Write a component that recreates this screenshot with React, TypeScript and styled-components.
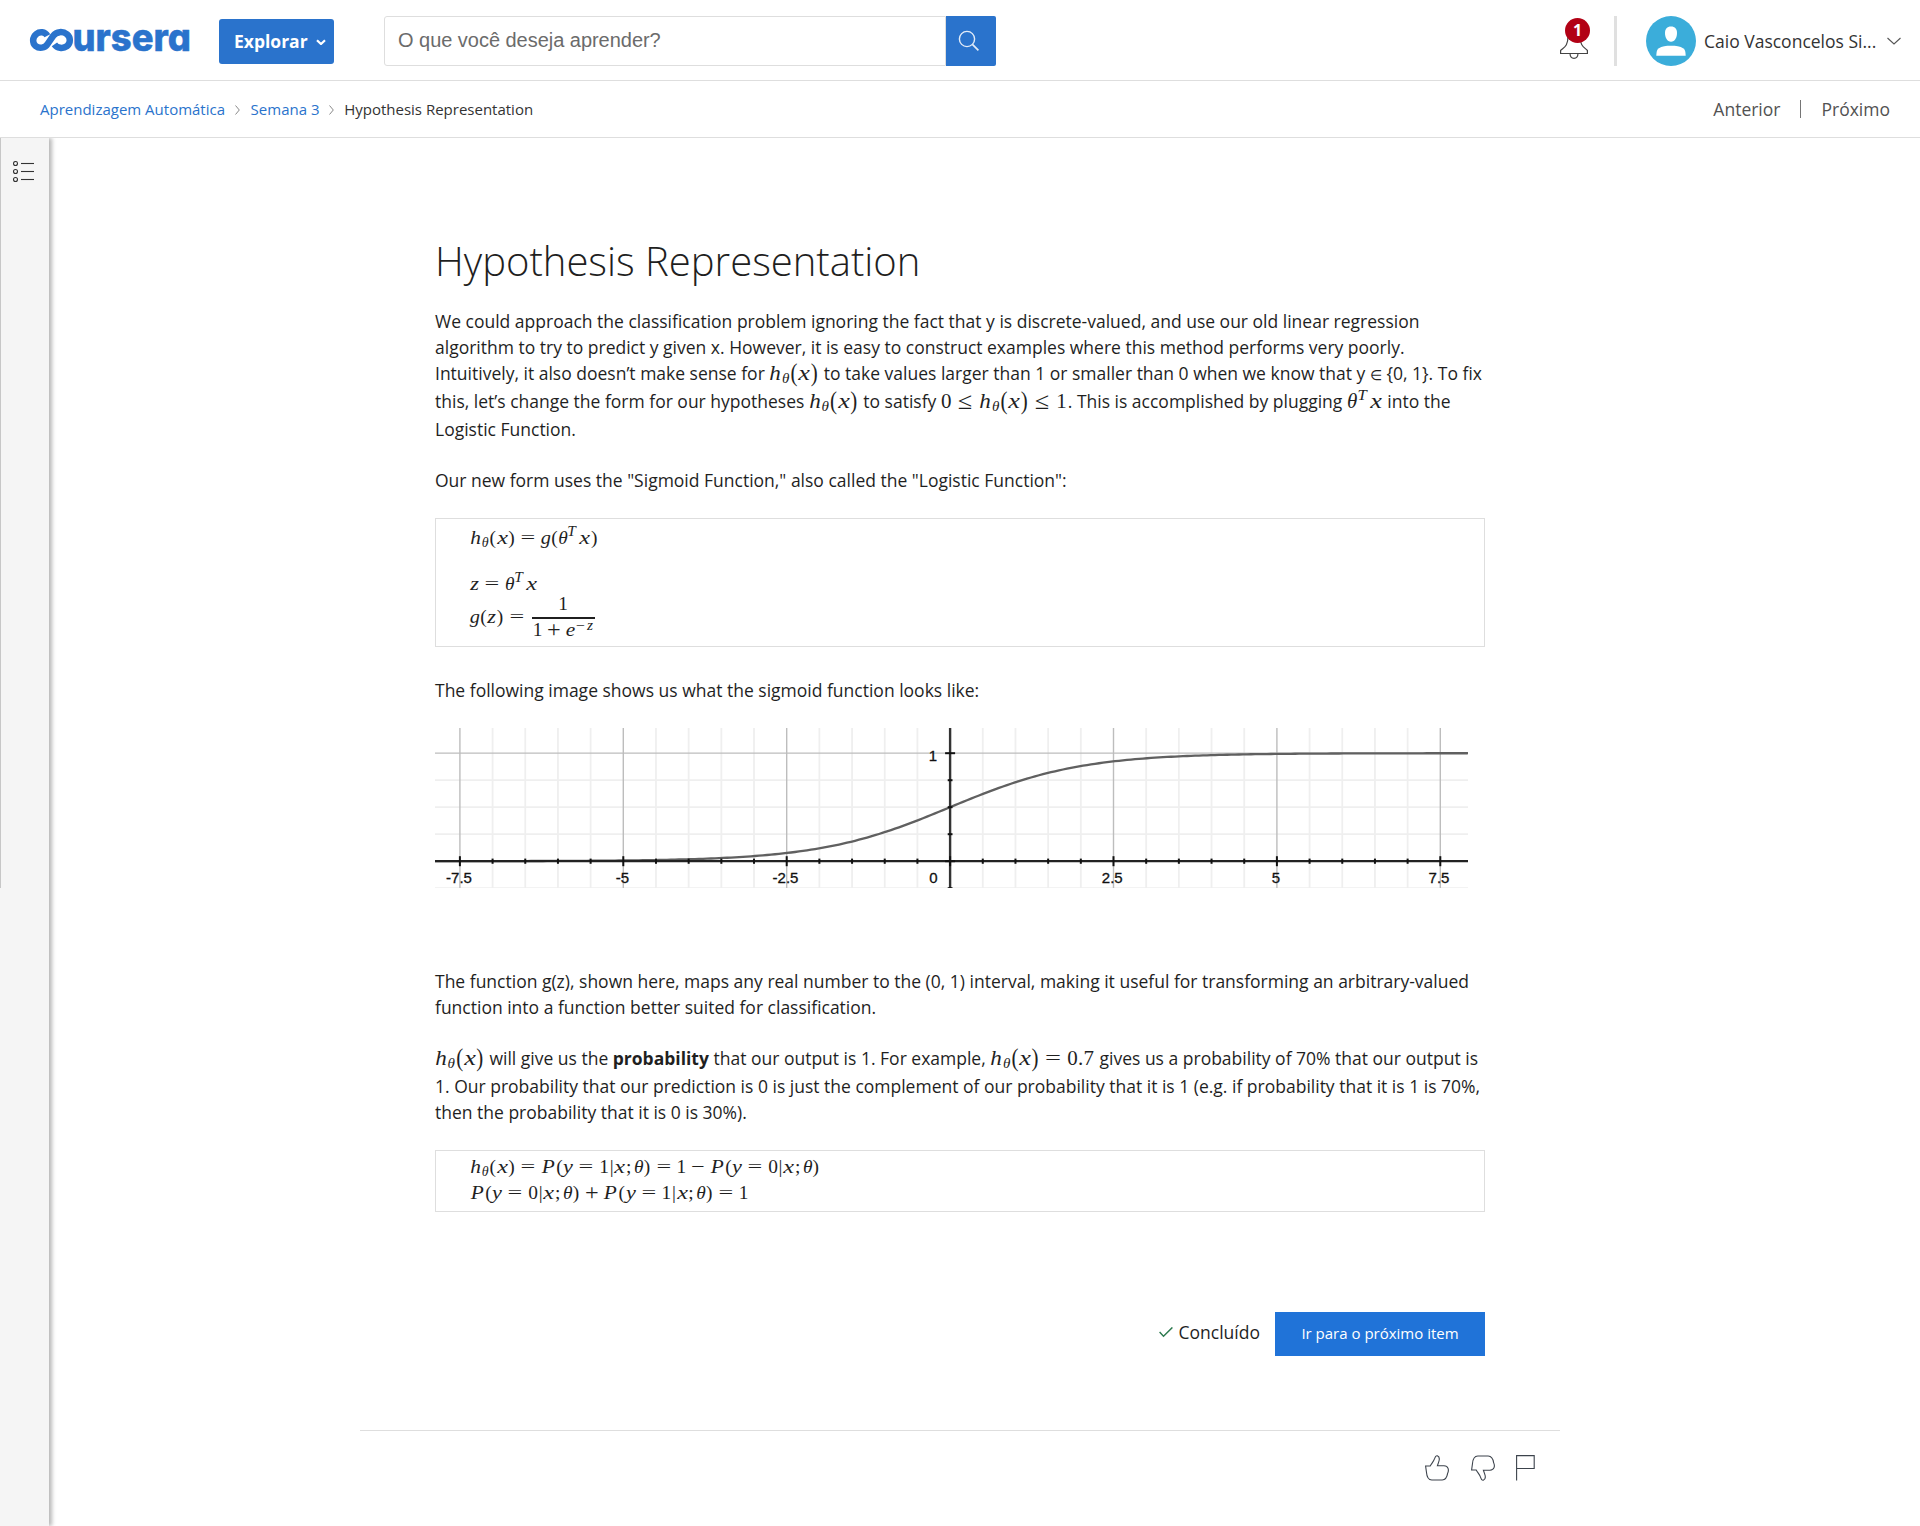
import React from "react";
import styled, { createGlobalStyle, css } from "styled-components";

const BLUE = "#2a73cc";
const SANS = '"Open Sans", "Noto Sans", sans-serif';
const SERIF = '"Liberation Serif", "DejaVu Serif", serif';

const GlobalStyle = createGlobalStyle`
  *, *::before, *::after { box-sizing: border-box; }
  body { margin: 0; background: #fff; color: #1f1f1f; font-family: ${SANS}; font-size: 17.5px; }
  button { font: inherit; border: 0; padding: 0; cursor: pointer; }
  svg { display: block; flex: none; }
  a { text-decoration: none; color: inherit; }
`;

const Page = styled.div`
  width: 1920px;
  height: 1526px;
  display: flex;
  flex-direction: column;
  overflow: hidden;
`;

/* ---------- header ---------- */

const Header = styled.header`
  height: 81px;
  flex: none;
  display: flex;
  align-items: flex-start;
  padding: 16px 19px 0 30px;
  border-bottom: 1px solid #dedede;
`;

const ExploreButton = styled.button`
  display: flex;
  align-items: center;
  gap: 8px;
  width: 115px;
  height: 45px;
  margin: 3px 0 0 30px;
  padding-left: 15px;
  border-radius: 3px;
  background: ${BLUE};
  color: #fff;
  font-weight: 700;
  line-height: 45px;
`;

const Search = styled.form`
  display: flex;
  width: 612px;
  height: 50px;
  margin-left: 50px;
`;

const SearchInput = styled.input`
  flex: 1;
  min-width: 0;
  height: 50px;
  padding: 0 13px 1px;
  border: 1px solid #dedede;
  border-radius: 3px 0 0 3px;
  outline: 0;
  font-family: "Liberation Sans", Arial, sans-serif;
  font-size: 20px;
  letter-spacing: -0.03px;
  &::placeholder { color: #6b6b6b; opacity: 1; }
`;

const SearchButton = styled.button`
  width: 50px;
  height: 50px;
  display: grid;
  place-items: center;
  padding-right: 4px;
  border-radius: 0 2px 2px 0;
  background: ${BLUE};
`;

const Account = styled.div`
  display: flex;
  margin-left: auto;
  height: 50px;
  align-items: center;
`;

const Notifications = styled.div`
  position: relative;
  width: 28px;
  height: 50px;
  padding-top: 14px;
`;

const Badge = styled.span`
  position: absolute;
  left: 5px;
  top: 2px;
  width: 25px;
  height: 25px;
  border-radius: 50%;
  background: #b20115;
  color: #fff;
  font-weight: 700;
  font-size: 16px;
  line-height: 24px;
  text-align: center;
`;

const HeaderRule = styled.div`
  width: 3px;
  height: 50px;
  margin: 0 29px 0 26px;
  background: #e0e0e0;
`;

const UserName = styled.span`
  width: 173px;
  margin: 0 10px 0 8px;
  white-space: nowrap;
  line-height: 50px;
  color: #333;
`;

/* ---------- breadcrumb bar ---------- */

const SubBar = styled.nav`
  height: 57px;
  flex: none;
  display: flex;
  align-items: center;
  justify-content: space-between;
  padding: 0 30px 0 40px;
  border-bottom: 1px solid #dedede;
`;

const Crumbs = styled.div`
  display: flex;
  align-items: center;
  font-size: 15px;
  white-space: nowrap;
`;

const Crumb = styled.a<{ $w: number; $current?: boolean }>`
  width: ${(p) => p.$w}px;
  color: ${(p) => (p.$current ? "#333" : BLUE)};
`;

const CrumbArrow = styled.svg`
  margin: 2px 10.6px 0 10px;
`;

const Pager = styled.div`
  display: flex;
  align-items: center;
  color: #525252;
`;

const PagerRule = styled.span`
  width: 1px;
  height: 18px;
  margin: 0 20px 0 20px;
  background: #757575;
`;

/* ---------- body ---------- */

const Body = styled.div`
  flex: 1;
  display: flex;
  min-height: 0;
  overflow: hidden;
`;

const Rail = styled.aside`
  width: 49px;
  flex: none;
  background: #f5f5f5;
  box-shadow: 3px 0 4px rgba(0, 0, 0, 0.28);
`;

const RailPane = styled.div`
  height: 750px;
  border-left: 1px solid #c7c7c7;
  padding: 23px 0 0 11px;
`;

const Main = styled.main`
  width: 1200px;
  margin-left: 311px;
  display: flex;
  flex-direction: column;
`;

const Article = styled.article`
  height: 1293px;
  padding: 99px 75px 0;
  border-bottom: 1px solid #dedede;
`;

const Title = styled.h1`
  margin: 0 0 23px;
  font-size: 40px;
  line-height: 48px;
  font-weight: 300;
  white-space: nowrap;
`;

const Paragraph = styled.p`
  margin: 0 0 25px;
`;

const Line = styled.span<{ $h?: number; $top?: number }>`
  display: block;
  height: ${(p) => p.$h ?? 26}px;
  line-height: 26px;
  padding-top: ${(p) => p.$top ?? 0}px;
  white-space: nowrap;
`;

const SetMember = styled.span`
  font-size: 14px;
`;

const FormulaBox = styled.div<{ $h: number; $pt: number; $mb?: number }>`
  height: ${(p) => p.$h}px;
  margin-bottom: ${(p) => p.$mb ?? 0}px;
  padding: ${(p) => p.$pt}px 0 0 34px;
  border: 1px solid #dedede;
`;

const FormulaRow = styled.div<{ $h: number; $mt?: number }>`
  display: flex;
  align-items: flex-start;
  height: ${(p) => p.$h}px;
  margin-top: ${(p) => p.$mt ?? 0}px;
`;

const Formula = styled.span<{ $inline?: boolean; $mt?: number; $lh?: number }>`
  display: ${(p) => (p.$inline ? "inline-flex" : "flex")};
  margin-top: ${(p) => p.$mt ?? 0}px;
  margin-right: ${(p) => (p.$inline ? 1 : 0)}px;
  font-family: ${SERIF};
  font-size: ${(p) => (p.$inline ? 21 : 19.4)}px;
  line-height: ${(p) => (p.$inline ? 20 : p.$lh ?? 26)}px;
  white-space: nowrap;
`;

const Glyph = styled.span<{
  $w: number;
  $italic?: boolean;
  $sx?: number;
  $sy?: number;
  $dx?: number;
  $dy?: number;
  $small?: boolean;
}>`
  display: inline-block;
  width: ${(p) => p.$w}em;
  text-align: center;
  font-style: ${(p) => (p.$italic ? "italic" : "normal")};
  transform: translate(${(p) => p.$dx ?? 0}px, ${(p) => p.$dy ?? 0}px) scale(${(p) => p.$sx ?? 1}, ${(p) => p.$sy ?? 1});
  ${(p) =>
    p.$small &&
    css`
      font-size: 0.72em;
    `}
`;

const Fraction = styled.span`
  width: 63px;
  margin-left: 2px;
  display: flex;
  flex-direction: column;
  align-items: center;
`;

const Denominator = styled.span`
  width: 63px;
  padding-left: 1px;
  border-top: 2px solid #1f1f1f;
`;

type G = { t: string; w: number; italic?: boolean; sx?: number; sy?: number; dx?: number; dy?: number; small?: boolean };

const SYMBOLS: Record<string, G> = {
  h: { t: "h", w: 0.576, italic: true, sx: 1.1 },
  x: { t: "x", w: 0.572, italic: true, sx: 1.25 },
  g: { t: "g", w: 0.5, italic: true, sx: 1.05 },
  z: { t: "z", w: 0.468, italic: true, sx: 1.15 },
  y: { t: "y", w: 0.52, italic: true, sx: 1.15 },
  P: { t: "P", w: 0.76, italic: true, sx: 1.1 },
  e: { t: "e", w: 0.466, italic: true, sx: 1.1 },
  q: { t: "θ", w: 0.469, italic: true },
  "(": { t: "(", w: 0.389 },
  ")": { t: ")", w: 0.389 },
  "=": { t: "=", w: 1.334, sx: 1.35, sy: 0.9 },
  "<": { t: "≤", w: 1.334, sx: 1.25, sy: 1.15 },
  "+": { t: "+", w: 1.222, sx: 1.25, sy: 1.2 },
  "-": { t: "−", w: 1.222, sx: 1.25 },
  "|": { t: "|", w: 0.278 },
  ";": { t: ";", w: 0.445, dx: -1 },
  "0": { t: "0", w: 0.5 },
  "1": { t: "1", w: 0.5 },
  "7": { t: "7", w: 0.5 },
  ".": { t: ".", w: 0.278 },
  _: { t: "θ", w: 0.56, italic: true, small: true, dy: 4.6 },
  "^": { t: "T", w: 0.86, italic: true, small: true, dx: -1.5, dy: -6.2, sx: 1.1 },
  m: { t: "−", w: 0.8, small: true, dy: -3.8, sx: 1.15 },
  Z: { t: "z", w: 0.56, italic: true, small: true, dy: -3.6, sx: 1.1 },
};

/* Typesets a compact source string, one symbol per character:
   q = theta, _ = theta subscript, ^ = T superscript. */
function Tex({ s, inline, mt, lh }: { s: string; inline?: boolean; mt?: number; lh?: number }) {
  return (
    <Formula $inline={inline} $mt={mt} $lh={lh}>
      {s.split("").map((c, i) => {
        const g = SYMBOLS[c];
        const paren = inline && (c === "(" || c === ")");
        return (
          <Glyph
            key={i}
            $w={g.w}
            $italic={g.italic}
            $sx={g.sx}
            $sy={paren ? 1.15 : g.sy}
            $dx={g.dx}
            $dy={g.dy}
            $small={g.small}
          >
            {g.t}
          </Glyph>
        );
      })}
    </Formula>
  );
}

/* ---------- sigmoid plot ---------- */

const ChartSvg = styled.svg`
  margin-bottom: 80px;
`;

const ChartText = styled.text`
  font-family: "Liberation Sans", Helvetica, sans-serif;
  font-size: 15px;
  fill: #111;
  stroke: #111;
  stroke-width: 0.3px;
`;

const X0 = 515.1;
const UX = 65.36;
const Y0 = 133.2;
const UY = 108;

function SigmoidChart() {
  const minor: number[] = [];
  for (let i = -15; i <= 15; i++) minor.push(i);
  let d = "";
  for (let px = 0; px <= 1033; px += 4) {
    const v = 1 / (1 + Math.exp(-(px - X0) / UX));
    d += `${px ? "L" : "M"}${px} ${(Y0 - v * UY).toFixed(2)}`;
  }
  d += `L1033 ${Y0 - UY}`;
  const labels: [string, number][] = [
    ["-7.5", 24],
    ["-5", 187.5],
    ["-2.5", 350.5],
    ["0", 498.5],
    ["2.5", 677.3],
    ["5", 840.8],
    ["7.5", 1004],
  ];
  return (
    <ChartSvg width={1033} height={160} viewBox="0 0 1033 160">
      {minor.map((i) =>
        i % 5 === 0 ? null : (
          <line key={i} x1={X0 + (i * UX) / 2} x2={X0 + (i * UX) / 2} y1={0} y2={160} stroke="#efefef" strokeWidth={1.8} />
        )
      )}
      {[-0.25, 0.25, 0.5, 0.75].map((v) => (
        <line key={v} x1={0} x2={1033} y1={Y0 - v * UY} y2={Y0 - v * UY} stroke="#efefef" strokeWidth={1.8} />
      ))}
      {[-15, -10, -5, 5, 10, 15].map((i) => (
        <line key={i} x1={X0 + (i * UX) / 2} x2={X0 + (i * UX) / 2} y1={0} y2={160} stroke="#bdbdbd" strokeWidth={1.4} />
      ))}
      <line x1={0} x2={1033} y1={Y0 - UY} y2={Y0 - UY} stroke="#bdbdbd" strokeWidth={1.3} />
      <path d={d} fill="none" stroke="#606060" strokeWidth={2.3} />
      <line x1={0} x2={1033} y1={Y0} y2={Y0} stroke="#222" strokeWidth={2.2} />
      <line x1={X0} x2={X0} y1={0} y2={160} stroke="#333" strokeWidth={2.4} />
      {minor.map((i) => {
        const r = i % 5 === 0 ? 5 : 2.6;
        const x = X0 + (i * UX) / 2;
        return <line key={i} x1={x} x2={x} y1={Y0 - r} y2={Y0 + r} stroke="#111" strokeWidth={2} />;
      })}
      {[-0.25, 0, 0.25, 0.5, 0.75, 1].map((v) => {
        const r = v === 1 || v === 0 ? 5 : 2.4;
        return <line key={v} x1={X0 - r} x2={X0 + r} y1={Y0 - v * UY} y2={Y0 - v * UY} stroke="#111" strokeWidth={2} />;
      })}
      {labels.map(([t, x]) => (
        <ChartText key={t} x={x} y={154.5} textAnchor="middle">
          {t}
        </ChartText>
      ))}
      <ChartText x={497.8} y={33.3} textAnchor="middle">
        1
      </ChartText>
    </ChartSvg>
  );
}

/* ---------- completion and feedback ---------- */

const Completion = styled.div`
  display: flex;
  justify-content: flex-end;
  align-items: center;
  height: 44px;
  margin-top: 100px;
`;

const Done = styled.span`
  display: flex;
  align-items: center;
  gap: 6px;
  margin-right: 15px;
  height: 44px;
  padding-bottom: 4px;
`;

const NextButton = styled.button`
  width: 210px;
  height: 44px;
  padding-bottom: 2px;
  background: #2073d8;
  color: #fff;
  font-size: 15px;
  line-height: 42px;
`;

const Feedback = styled.div`
  display: flex;
  justify-content: flex-end;
  align-items: flex-start;
  gap: 21px;
  padding: 24px 25px 0 0;
`;

const LogoSvg = styled.svg`
  overflow: visible;
`;

const WordmarkText = styled.text`
  font-family: Inter, sans-serif;
  font-size: 38.5px;
  font-weight: 800;
  font-feature-settings: "cv11" 1;
  fill: ${BLUE};
  stroke: ${BLUE};
  stroke-width: 0.5px;
`;

function Logo() {
  return (
    <LogoSvg width={159} height={50} viewBox="0 0 159 50" role="img" aria-label="coursera">
      <path
        d="M17.400 19.800C15 15.400 9.600 15.300 6.400 17.900C2.200 21.300 2.200 27.100 5.600 29.900C9.300 33 15 32.100 17.600 28L23.200 19.800C26.400 15.300 33 15.100 37 18.300C40.800 21.500 40.700 27.300 37 30.100C32.800 33.200 27 32.100 24.400 28.300"
        fill="none"
        stroke={BLUE}
        strokeWidth={6.5}
      />
      <WordmarkText x={42.5} y={34.8} textLength={118.5} lengthAdjust="spacingAndGlyphs">
        ursera
      </WordmarkText>
    </LogoSvg>
  );
}

export default function App() {
  return (
    <>
      <GlobalStyle />
      <Page>
        <Header>
          <Logo />
          <ExploreButton>
            Explorar
            <svg width={10} height={7} viewBox="0 0 10 7">
              <path d="M1 2.2L5 6L9 2.2" fill="none" stroke="#fff" strokeWidth={2.2} />
            </svg>
          </ExploreButton>
          <Search>
            <SearchInput placeholder="O que você deseja aprender?" />
            <SearchButton type="button" aria-label="Buscar">
              <svg width={22} height={22} viewBox="0 0 22 22">
                <circle cx={9} cy={9} r={7.6} fill="none" stroke="#e3ecf8" strokeWidth={1.4} />
                <path d="M14.4 14.4L20.4 20.4" stroke="#e3ecf8" strokeWidth={1.7} />
              </svg>
            </SearchButton>
          </Search>
          <Account>
            <Notifications>
              <svg width={28} height={30} viewBox="0 0 28 30">
                <path
                  d="M8 6C8 2.5 10.5 1 14 1S20 2.5 20 6C20 16 24 17 27.4 20.5V23.5H.6V20.5C4.5 17 8 16 8 6Z"
                  fill="none"
                  stroke="#444"
                  strokeWidth={1.2}
                />
                <path d="M10 23.5C10.3 30 17.7 30 18 23.5" fill="none" stroke="#444" strokeWidth={1.2} />
              </svg>
              <Badge>1</Badge>
            </Notifications>
            <HeaderRule />
            <svg width={50} height={50} viewBox="0 0 50 50">
              <circle cx={25} cy={25} r={25} fill="#3badda" />
              <path d="M25 10.5C29 10.5 31 13 31 17C31 21.5 28.8 25.7 25 25.7S19 21.5 19 17C19 13 21 10.5 25 10.5Z" fill="#fff" />
              <path d="M10.3 39.7C10.4 36 11 33.6 12.5 32.5C16 30.3 20 29.8 25 29.8S34 30.3 37.5 32.5C39 33.6 39.6 36 39.7 39.7Z" fill="#fff" />
            </svg>
            <UserName>Caio Vasconcelos Si...</UserName>
            <svg width={14} height={8} viewBox="0 0 14 8">
              <path d="M.5 1L7 7L13.5 1" fill="none" stroke="#555" strokeWidth={1.1} />
            </svg>
          </Account>
        </Header>

        <SubBar>
          <Crumbs>
            <Crumb $w={185}>Aprendizagem Automática</Crumb>
            <CrumbArrow width={5} height={10} viewBox="0 0 5 10">
              <path d="M.5.5L4.3 5L.5 9.5" fill="none" stroke="#888" />
            </CrumbArrow>
            <Crumb $w={68}>Semana 3</Crumb>
            <CrumbArrow width={5} height={10} viewBox="0 0 5 10">
              <path d="M.5.5L4.3 5L.5 9.5" fill="none" stroke="#888" />
            </CrumbArrow>
            <Crumb $w={190} $current>
              Hypothesis Representation
            </Crumb>
          </Crumbs>
          <Pager>
            <a>Anterior</a>
            <PagerRule />
            <a>Próximo</a>
          </Pager>
        </SubBar>

        <Body>
          <Rail>
            <RailPane>
              <svg width={24} height={22} viewBox="0 0 24 22">
                {[2.5, 10.5, 18.5].map((y) => (
                  <g key={y} fill="none" stroke="#333">
                    <circle cx={3.5} cy={y} r={2} strokeWidth={1.1} />
                    <path d={`M9 ${y}H22`} strokeWidth={1.1} />
                  </g>
                ))}
              </svg>
            </RailPane>
          </Rail>

          <Main>
            <Article>
              <Title>Hypothesis Representation</Title>
              <Paragraph>
                <Line>We could approach the classification problem ignoring the fact that y is discrete-valued, and use our old linear regression</Line>
                <Line>algorithm to try to predict y given x. However, it is easy to construct examples where this method performs very poorly.</Line>
                <Line>
                  Intuitively, it also doesn’t make sense for <Tex inline s="h_(x)" /> to take values larger than 1 or smaller than 0 when we know that y{" "}
                  <SetMember>∈</SetMember> {"{0, 1}"}. To fix
                </Line>
                <Line $h={28} $top={2}>
                  this, let’s change the form for our hypotheses <Tex inline s="h_(x)" /> to satisfy <Tex inline s="0<h_(x)<1" />. This is accomplished by plugging{" "}
                  <Tex inline s="q^x" /> into the
                </Line>
                <Line $h={28} $top={2}>Logistic Function.</Line>
              </Paragraph>
              <Paragraph>
                <Line>Our new form uses the "Sigmoid Function," also called the "Logistic Function":</Line>
              </Paragraph>

              <FormulaBox $h={129} $pt={6} $mb={30}>
                <FormulaRow $h={26}>
                  <Tex s="h_(x)=g(q^x)" />
                </FormulaRow>
                <FormulaRow $h={20} $mt={20}>
                  <Tex s="z=q^x" />
                </FormulaRow>
                <FormulaRow $h={50}>
                  <Tex s="g(z)=" mt={13} />
                  <Fraction>
                    <Tex s="1" />
                    <Denominator>
                      <Tex s="1+emZ" lh={22} />
                    </Denominator>
                  </Fraction>
                </FormulaRow>
              </FormulaBox>

              <Paragraph>
                <Line>The following image shows us what the sigmoid function looks like:</Line>
              </Paragraph>
              <SigmoidChart />

              <Paragraph>
                <Line>The function g(z), shown here, maps any real number to the (0, 1) interval, making it useful for transforming an arbitrary-valued</Line>
                <Line>function into a function better suited for classification.</Line>
              </Paragraph>
              <Paragraph>
                <Line>
                  <Tex inline s="h_(x)" /> will give us the <strong>probability</strong> that our output is 1. For example, <Tex inline s="h_(x)=0.7" /> gives us a
                  probability of 70% that our output is
                </Line>
                <Line $h={28} $top={2}>
                  1. Our probability that our prediction is 0 is just the complement of our probability that it is 1 (e.g. if probability that it is 1 is 70%,
                </Line>
                <Line>then the probability that it is 0 is 30%).</Line>
              </Paragraph>

              <FormulaBox $h={62} $pt={3}>
                <FormulaRow $h={26}>
                  <Tex s="h_(x)=P(y=1|x;q)=1-P(y=0|x;q)" />
                </FormulaRow>
                <FormulaRow $h={26}>
                  <Tex s="P(y=0|x;q)+P(y=1|x;q)=1" />
                </FormulaRow>
              </FormulaBox>

              <Completion>
                <Done>
                  <svg width={14} height={11} viewBox="0 0 14 11">
                    <path d="M.6 5L4.500 9.300L13.400.4" fill="none" stroke="#2d7a4f" strokeWidth={1.4} />
                  </svg>
                  Concluído
                </Done>
                <NextButton>Ir para o próximo item</NextButton>
              </Completion>
            </Article>

            <Feedback>
              <svg width={25} height={26} viewBox="0 0 25 26">
                <path
                  d="M.6 11H5.2C6.6 8.2 8.6 6.8 9.8 3.2C10.3 1.4 11.2.5 12.3.8C14.4 1.6 14.6 4.2 13.8 6.6L12.4 10.8H19C23.4 11 24.2 14.8 22.6 18.4C22 22.5 20.5 24.8 17.2 25H6.8C3.2 24.8 1.8 21.5 1.5 17.5Z"
                  fill="none"
                  stroke="#3c434c"
                  strokeWidth={1.1}
                />
              </svg>
              <svg width={24} height={26} viewBox="0 0 24 26">
                <path
                  d="M.6 15H5.2C6.6 17.8 8.6 19.2 9.8 22.8C10.3 24.6 11.2 25.5 12.3 25.2C14.4 24.4 14.6 21.8 13.8 19.4L12.4 15.2H19C23.4 15 24.2 11.2 22.6 7.6C22 3.5 20.5 1.2 17.2 1H6.8C3.2 1.2 1.8 4.5 1.5 8.5Z"
                  fill="none"
                  stroke="#3c434c"
                  strokeWidth={1.1}
                />
              </svg>
              <svg width={19} height={26} viewBox="0 0 19 26">
                <path d="M.6 25.5V.6H18.2V13.5H.6" fill="none" stroke="#3c434c" strokeWidth={1.1} />
              </svg>
            </Feedback>
          </Main>
        </Body>
      </Page>
    </>
  );
}
